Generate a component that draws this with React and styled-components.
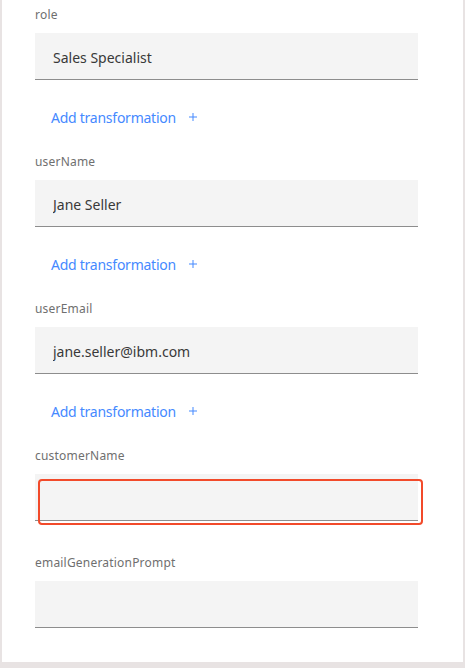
import React from 'react'
import styled, { createGlobalStyle } from 'styled-components'

const GlobalStyle = createGlobalStyle`
  html, body {
    margin: 0;
    padding: 0;
    background: #e8e3e3;
  }
  body {
    font-family: 'Noto Sans', 'Open Sans', sans-serif;
  }
`

const Page = styled.div`
  width: 465px;
  height: 668px;
  background: #e8e3e3;
  padding-left: 2px;
  box-sizing: border-box;
`

const Panel = styled.div`
  width: 461px;
  height: 662px;
  background: #ffffff;
  box-sizing: border-box;
  padding: 6px 0 0 33px;
  display: flex;
  flex-direction: column;
`

const Field = styled.div`
  display: flex;
  flex-direction: column;
  margin-bottom: ${(props) => (props.$hasAction ? '12px' : '33px')};
`

const Label = styled.label`
  font-size: 12px;
  line-height: 18px;
  color: #6f6f6f;
  letter-spacing: 0.2px;
  margin-bottom: 9px;
`

const InputWrap = styled.div`
  position: relative;
  width: 383px;
`

const Input = styled.input`
  display: block;
  width: 100%;
  height: 47px;
  box-sizing: border-box;
  border: none;
  border-bottom: 1px solid #8d8d8d;
  background: #f4f4f4;
  padding: 3px 18px 0;
  font-family: inherit;
  font-size: 14px;
  color: #393939;
  outline: none;
`

const Highlight = styled.div`
  position: absolute;
  left: 3px;
  top: 5px;
  width: 385px;
  height: 46px;
  box-sizing: border-box;
  border: 2px solid #f24a2a;
  border-radius: 4px;
  pointer-events: none;
`

const AddButton = styled.button`
  display: flex;
  align-items: center;
  height: 48px;
  margin-top: 13px;
  padding: 0 0 0 16px;
  border: none;
  background: transparent;
  font-family: inherit;
  font-size: 14px;
  letter-spacing: -0.25px;
  color: #4589ff;
  cursor: pointer;
  align-self: flex-start;

  svg {
    margin-left: 9px;
  }
`

const PlusIcon = () => (
  <svg width="16" height="16" viewBox="0 0 32 32" fill="#4589ff">
    <path d="M17 15V8h-2v7H8v2h7v7h2v-7h7v-2z" />
  </svg>
)

const fields = [
  { name: 'role', value: 'Sales Specialist', action: true },
  { name: 'userName', value: 'Jane Seller', action: true },
  { name: 'userEmail', value: 'jane.seller@ibm.com', action: true },
  { name: 'customerName', value: '', highlight: true },
  { name: 'emailGenerationPrompt', value: '' },
]

export default function App() {
  return (
    <>
      <GlobalStyle />
      <Page>
        <Panel>
          {fields.map((f) => (
            <Field key={f.name} $hasAction={f.action}>
              <Label>{f.name}</Label>
              <InputWrap>
                <Input defaultValue={f.value} />
                {f.highlight && <Highlight />}
              </InputWrap>
              {f.action && (
                <AddButton>
                  Add transformation
                  <PlusIcon />
                </AddButton>
              )}
            </Field>
          ))}
        </Panel>
      </Page>
    </>
  )
}
